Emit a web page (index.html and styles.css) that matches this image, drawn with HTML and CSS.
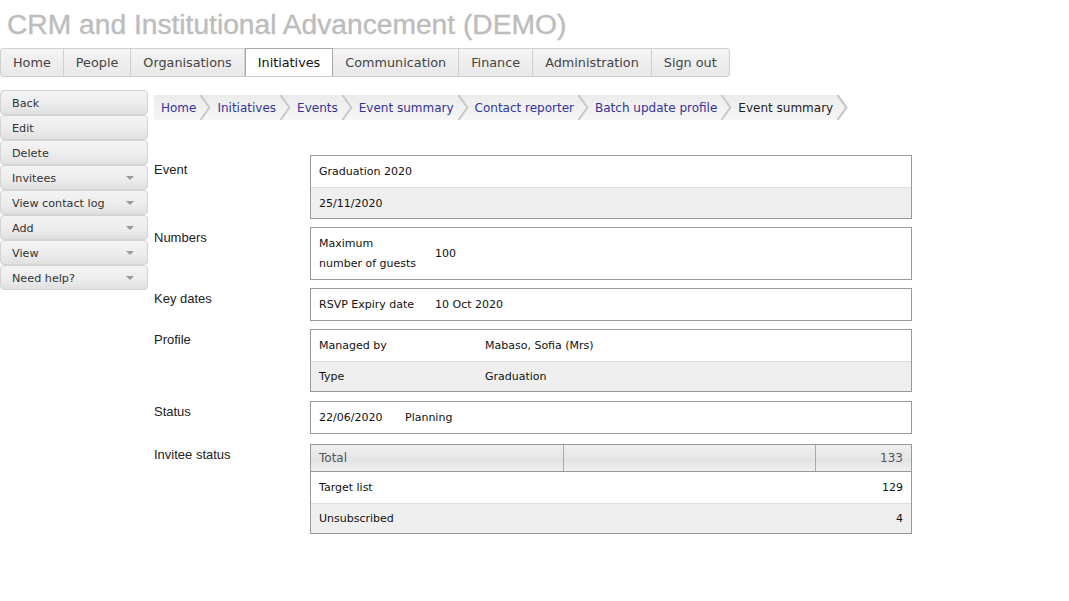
FILE: index.html
```html
<!DOCTYPE html>
<html>
<head>
<meta charset="utf-8">
<link rel="stylesheet" href="styles.css">
</head>
<body>
<h1 class="title">CRM and Institutional Advancement (DEMO)</h1>
<nav class="nav">
  <a class="nav-item">Home</a>
  <a class="nav-item">People</a>
  <a class="nav-item">Organisations</a>
  <a class="nav-item active">Initiatives</a>
  <a class="nav-item">Communication</a>
  <a class="nav-item">Finance</a>
  <a class="nav-item">Administration</a>
  <a class="nav-item">Sign out</a>
</nav>
<div class="layout">
  <aside class="side">
    <a class="side-btn">Back</a>
    <a class="side-btn">Edit</a>
    <a class="side-btn">Delete</a>
    <a class="side-btn drop">Invitees</a>
    <a class="side-btn drop">View contact log</a>
    <a class="side-btn drop">Add</a>
    <a class="side-btn drop">View</a>
    <a class="side-btn drop">Need help?</a>
  </aside>
  <main class="main">
    <div class="crumbs">
      <a class="crumb">Home</a><svg class="sep" viewBox="0 0 11 25"><path d="M0.5 0 L9.5 12.5 L0.5 25" fill="none" stroke="#c4c4c4" stroke-width="2"/><path d="M1.8 0 L10.6 12.5 L1.8 25" fill="none" stroke="#e2e2e2" stroke-width="1"/></svg>
      <a class="crumb">Initiatives</a><svg class="sep" viewBox="0 0 11 25"><path d="M0.5 0 L9.5 12.5 L0.5 25" fill="none" stroke="#c4c4c4" stroke-width="2"/><path d="M1.8 0 L10.6 12.5 L1.8 25" fill="none" stroke="#e2e2e2" stroke-width="1"/></svg>
      <a class="crumb">Events</a><svg class="sep" viewBox="0 0 11 25"><path d="M0.5 0 L9.5 12.5 L0.5 25" fill="none" stroke="#c4c4c4" stroke-width="2"/><path d="M1.8 0 L10.6 12.5 L1.8 25" fill="none" stroke="#e2e2e2" stroke-width="1"/></svg>
      <a class="crumb">Event summary</a><svg class="sep" viewBox="0 0 11 25"><path d="M0.5 0 L9.5 12.5 L0.5 25" fill="none" stroke="#c4c4c4" stroke-width="2"/><path d="M1.8 0 L10.6 12.5 L1.8 25" fill="none" stroke="#e2e2e2" stroke-width="1"/></svg>
      <a class="crumb">Contact reporter</a><svg class="sep" viewBox="0 0 11 25"><path d="M0.5 0 L9.5 12.5 L0.5 25" fill="none" stroke="#c4c4c4" stroke-width="2"/><path d="M1.8 0 L10.6 12.5 L1.8 25" fill="none" stroke="#e2e2e2" stroke-width="1"/></svg>
      <a class="crumb">Batch update profile</a><svg class="sep" viewBox="0 0 11 25"><path d="M0.5 0 L9.5 12.5 L0.5 25" fill="none" stroke="#c4c4c4" stroke-width="2"/><path d="M1.8 0 L10.6 12.5 L1.8 25" fill="none" stroke="#e2e2e2" stroke-width="1"/></svg>
      <span class="crumb current">Event summary</span><svg class="sep" viewBox="0 0 11 25"><path d="M1 0 H11 V25 H1 L10 12.5 Z" fill="#fff"/><path d="M0.5 0 L9.5 12.5 L0.5 25" fill="none" stroke="#c4c4c4" stroke-width="2"/></svg>
    </div>

    <div class="sections">
      <div class="section">
        <div class="label first">Event</div>
        <div class="box">
          <div class="row">Graduation 2020</div>
          <div class="row alt">25/11/2020</div>
        </div>
      </div>

      <div class="section">
        <div class="label">Numbers</div>
        <div class="box">
          <div class="row tall">
            <div class="k k-num">Maximum<br>number of guests</div>
            <div class="v">100</div>
          </div>
        </div>
      </div>

      <div class="section">
        <div class="label">Key dates</div>
        <div class="box">
          <div class="row">
            <div class="k k-date">RSVP Expiry date</div>
            <div class="v">10 Oct 2020</div>
          </div>
        </div>
      </div>

      <div class="section">
        <div class="label">Profile</div>
        <div class="box">
          <div class="row">
            <div class="k k-prof">Managed by</div>
            <div class="v">Mabaso, Sofia (Mrs)</div>
          </div>
          <div class="row alt short">
            <div class="k k-prof">Type</div>
            <div class="v">Graduation</div>
          </div>
        </div>
      </div>

      <div class="section spaced">
        <div class="label">Status</div>
        <div class="box">
          <div class="row">
            <div class="k k-stat">22/06/2020</div>
            <div class="v">Planning</div>
          </div>
        </div>
      </div>

      <div class="section spaced2">
        <div class="label">Invitee status</div>
        <div class="box">
          <div class="thead">
            <div class="th">Total</div>
            <div class="th"></div>
            <div class="th num">133</div>
          </div>
          <div class="row">
            <div class="grow">Target list</div>
            <div class="num">129</div>
          </div>
          <div class="row alt short">
            <div class="grow">Unsubscribed</div>
            <div class="num">4</div>
          </div>
        </div>
      </div>
    </div>
  </main>
</div>
</body>
</html>
```

FILE: styles.css
```css
* { box-sizing: border-box; }
html, body { margin: 0; padding: 0; background: #fff; }
body {
  font-family: "DejaVu Sans", Verdana, sans-serif;
  color: #222;
}

.title {
  margin: 0;
  padding: 7px 0 0 7px;
  height: 48px;
  font-family: "Liberation Sans", Arial, sans-serif;
  font-weight: normal;
  font-size: 28.2px;
  line-height: 34px;
  color: #bdbdbd;
  -webkit-text-stroke: 0.4px #bdbdbd;
}

.nav {
  display: inline-flex;
  height: 29px;
  border: 1px solid #cfcfcf;
  border-radius: 3px;
  background: linear-gradient(#f4f4f4, #e8e8e8);
  white-space: nowrap;
}
.nav-item {
  display: flex;
  align-items: center;
  padding: 0 12px;
  font-size: 12.8px;
  color: #444;
  border-right: 1px solid #cfcfcf;
}
.nav-item:last-child { border-right: none; }
.nav-item.active {
  background: #fff;
  color: #111;
  margin: -1px 0;
  border: 1px solid #aaa;
  border-bottom-color: #ccc;
}

.layout {
  display: flex;
  margin-top: 13px;
}
.side {
  width: 148px;
  display: flex;
  flex-direction: column;
}
.side-btn {
  position: relative;
  display: flex;
  align-items: center;
  height: 25px;
  padding: 2px 0 0 11px;
  font-size: 11.2px;
  color: #333;
  border: 1px solid #d4d4d4;
  border-radius: 4px;
  background: linear-gradient(#f3f3f3 0%, #ededed 55%, #e0e0e0 100%);
}
.side-btn.drop::after {
  content: "";
  position: absolute;
  right: 13px;
  top: 10px;
  border-left: 4px solid transparent;
  border-right: 4px solid transparent;
  border-top: 4px solid #999;
}

.main {
  margin-left: 6px;
  flex: 1;
}

.crumbs {
  display: inline-flex;
  align-items: stretch;
  margin-top: 5px;
  height: 25px;
  background: linear-gradient(#ececec, #f6f6f6);
  white-space: nowrap;
}
.crumb {
  display: flex;
  align-items: center;
  padding: 0 4px 0 6px;
  font-size: 12px;
  color: #333399;
}
.crumb:first-child { padding-left: 7px; }
.crumb.current { color: #222; }
.sep {
  width: 11px;
  height: 25px;
  flex: none;
}

.sections {
  margin-top: 35px;
  display: flex;
  flex-direction: column;
  gap: 8px;
}
.section {
  display: flex;
}
.section.spaced { margin-top: 1px; }
.section.spaced2 { margin-top: 2px; }
.label {
  width: 156px;
  padding-top: 3px;
  font-family: "Liberation Sans", Arial, sans-serif;
  font-size: 13px;
  color: #222;
}
.label.first { padding-top: 7px; }
.box {
  width: 602px;
  border: 1px solid #999;
}
.row {
  display: flex;
  align-items: center;
  height: 31px;
  padding: 0 8px;
  font-size: 11px;
  color: #111;
  background: #fff;
}
.row + .row { border-top: 1px solid #ddd; }
.row.short { height: 30px; }
.row.alt { background: #efefef; }
.row.tall { height: 51px; line-height: 20px; }
.k-num { width: 116px; }
.k-date { width: 116px; }
.k-prof { width: 166px; }
.k-stat { width: 86px; }
.grow { flex: 1; }
.num { text-align: right; }

.thead {
  display: flex;
  height: 27px;
  border-bottom: 1px solid #999;
}
.th {
  display: flex;
  align-items: center;
  padding: 0 8px;
  font-size: 12px;
  color: #555;
  background: linear-gradient(#f0f0f0, #e4e4e4 55%, #eeeeee);
}
.th:nth-child(1) { width: 253px; border-right: 1px solid #aaa; }
.th:nth-child(2) { width: 252px; border-right: 1px solid #aaa; }
.th:nth-child(3) { flex: 1; justify-content: flex-end; }
```
